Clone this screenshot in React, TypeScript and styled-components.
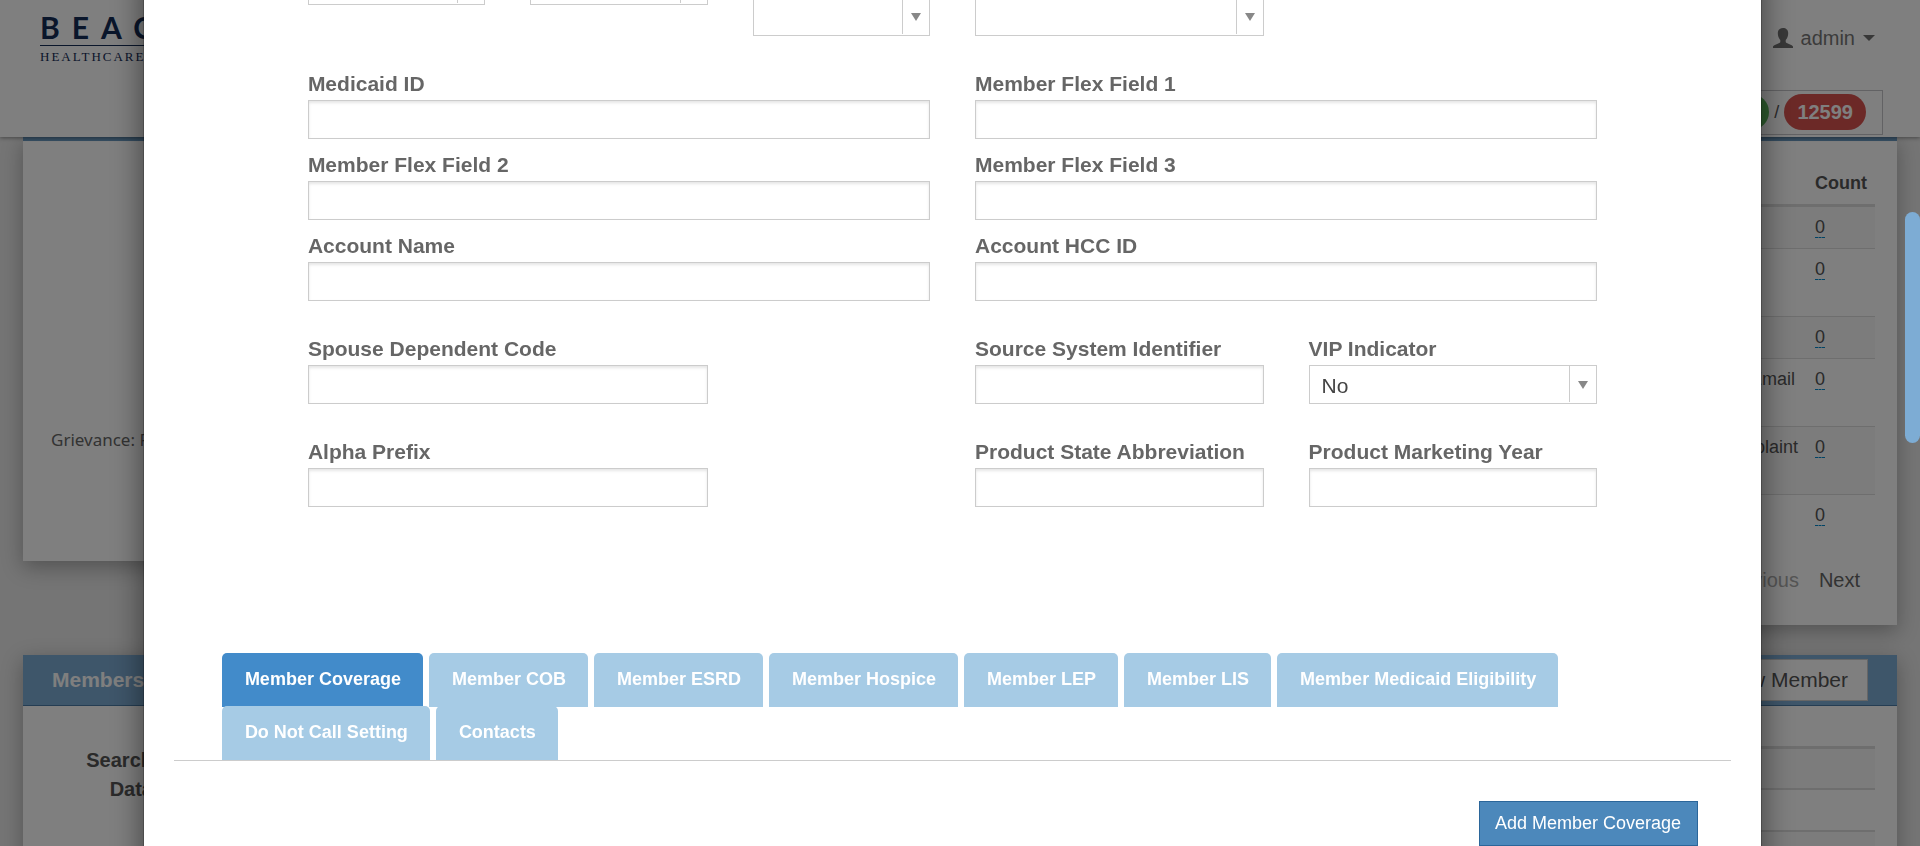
import React, { useId } from "react";
import styled, { createGlobalStyle } from "styled-components";

const GlobalStyle = createGlobalStyle`
  *, *::before, *::after { box-sizing: border-box; }
  body {
    margin: 0;
    background: #eaeaea;
    color: #555;
    font-family: "Liberation Sans", Arial, sans-serif;
    font-size: 18px;
    line-height: 26px;
  }
  button, input, select { font-family: inherit; }
`;

/* ---------- page behind the dialog ---------- */

const Page = styled.div`
  height: 100vh;
  overflow: hidden;
`;

const Header = styled.header`
  position: relative;
  z-index: 1;
  display: flex;
  justify-content: space-between;
  height: 137px;
  background: #fff;
  box-shadow: 0 1px 4px rgba(0, 0, 0, 0.4);
`;

const Logo = styled.div`
  width: 220px;
  margin: 11px 0 0 40px;
  color: #142c56;
`;

const LogoName = styled.div`
  padding-bottom: 2px;
  border-bottom: 1px solid #142c56;
  font: bold 30px/32px Lato, sans-serif;
  letter-spacing: 12px;
`;

const LogoTag = styled.div`
  font: 13px/22px "Liberation Serif", serif;
  letter-spacing: 2px;
`;

const HeaderSide = styled.div`
  display: flex;
  flex-direction: column;
  align-items: flex-end;
  gap: 38px;
  padding: 24px 37px 0 0;
`;

const UserButton = styled.button`
  display: flex;
  align-items: center;
  gap: 8px;
  padding: 0;
  margin-right: 8px;
  border: 0;
  background: none;
  color: #777;
  font-size: 20px;
  line-height: 28px;
`;

const Counters = styled.div`
  display: flex;
  align-items: center;
  gap: 5px;
  height: 45px;
  padding: 0 16px 2px;
  border: 1px solid #c4c4c8;
`;

const Badge = styled.span<{ $color: string }>`
  padding: 0 13px;
  border-radius: 18px;
  background: ${(p) => p.$color};
  color: #fff;
  font-size: 20px;
  font-weight: bold;
  line-height: 36px;
`;

const Main = styled.main`
  display: flex;
  flex-direction: column;
  gap: 30px;
  padding: 0 23px;
`;

const CardRow = styled.div`
  display: grid;
  grid-template-columns: 1fr 1fr;
  gap: 30px;
  align-items: start;
`;

const Card = styled.section`
  border-top: 4px solid #6c9cc4;
  background: #fff;
  box-shadow: 0 6px 20px rgba(0, 0, 0, 0.3);
`;

const ChartCard = styled(Card)`
  padding: 287px 28px 109px;
  font-family: "Noto Sans", sans-serif;
  font-size: 17px;
  line-height: 24px;
  color: #666;
`;

const TableCard = styled(Card)`
  padding: 20px 22px 31px;
`;

const Table = styled.table`
  width: 100%;
  border-spacing: 0;
  table-layout: fixed;
`;

const HeadCell = styled.th<{ $width?: number }>`
  width: ${(p) => (p.$width ? `${p.$width}px` : "auto")};
  padding: 9px 8px 8px;
  border-bottom: 3px solid #ddd;
  text-align: left;
`;

const BodyRow = styled.tr<{ $tall?: boolean }>`
  height: ${(p) => (p.$tall ? 68 : 42)}px;
  &:nth-child(odd) { background: #f9f9f9; }
  &:first-child { height: 41px; }
  &:first-child td { border-top: 0; }
`;

const Cell = styled.td`
  padding: 7px 8px;
  border-top: 1px solid #ddd;
  vertical-align: top;
`;

const CountLink = styled.a`
  border-bottom: 1px dashed #08c;
  color: #555;
  text-decoration: none;
`;

const Pager = styled.nav`
  display: flex;
  justify-content: flex-end;
  gap: 20px;
  padding: 4px 15px 0 0;
  font-size: 20px;
  line-height: 28px;
`;

const PagerLink = styled.a<{ $disabled?: boolean }>`
  color: ${(p) => (p.$disabled ? "#aaa" : "#666")};
  text-decoration: none;
`;

const Panel = styled.section`
  background: #fff;
  box-shadow: 0 6px 20px rgba(0, 0, 0, 0.3);
`;

const PanelHeader = styled.div`
  display: flex;
  align-items: center;
  justify-content: space-between;
  height: 51px;
  padding: 0 29px;
  border-bottom: 1px solid #4a7ba6;
  background: #7dacd4;
`;

const PanelTitle = styled.h2`
  margin: 0;
  color: #fff;
  font-size: 21px;
`;

const NewButton = styled.button`
  height: 42px;
  padding: 0 19px;
  border: 1px solid #ccc;
  background: #fff;
  color: #555;
  font-size: 21px;
`;

const PanelBody = styled.div`
  display: grid;
  grid-template-columns: 1fr 1fr;
  gap: 60px;
  padding: 40px 22px;
`;

const SearchForm = styled.div`
  display: grid;
  grid-template-columns: 108px 1fr;
  gap: 33px 30px;
  font-size: 20px;
  font-weight: bold;
  line-height: 29px;
  text-align: right;
`;

const ResultRow = styled.tr`
  height: 42px;
  &:nth-child(odd) { background: #f9f9f9; }
  &:first-child td { border-top-width: 3px; }
`;

const ResultCell = styled.td`
  border-top: 2px solid #ddd;
`;

/* ---------- dialog ---------- */

const Backdrop = styled.div`
  position: fixed;
  inset: 0;
  z-index: 10;
  display: flex;
  overflow: hidden;
  background: rgba(0, 0, 0, 0.5);
`;

const DialogArea = styled.div`
  flex: 1;
  display: flex;
  justify-content: center;
  align-items: flex-start;
`;

const Dialog = styled.div`
  width: 85%;
  margin-top: -35px;
  padding: 0 30px 60px;
  border: 1px solid rgba(0, 0, 0, 0.2);
  background: #fff;
  background-clip: padding-box;
  box-shadow: 0 5px 30px rgba(0, 0, 0, 0.5);
`;

const ScrollTrack = styled.div`
  width: 15px;
  padding-top: 212px;
`;

const ScrollThumb = styled.div`
  height: 231px;
  border-radius: 8px;
  background: #7dacd4;
`;

const Form = styled.form`
  display: flex;
  flex-direction: column;
  gap: 36px;
  padding: 0 134px;
`;

const FieldGrid = styled.div`
  display: grid;
  grid-template-columns: repeat(12, minmax(0, 1fr));
  gap: 14px 45px;
  align-items: start;
`;

const Field = styled.div<{ $span: number; $start?: number; $dropped?: boolean }>`
  grid-column: ${(p) => p.$start ?? "auto"} / span ${(p) => p.$span};
  padding-top: ${(p) => (p.$dropped ? 31 : 0)}px;
`;

const Label = styled.label`
  display: block;
  padding-bottom: 4px;
  color: #666;
  font-size: 21px;
  font-weight: bold;
  line-height: 24px;
  white-space: nowrap;
`;

const Input = styled.input`
  display: block;
  width: 100%;
  height: 39px;
  padding: 0 12px;
  border: 1px solid #ccc;
  background: #fff;
  box-shadow: inset 0 2px 3px rgba(0, 0, 0, 0.1);
  color: #444;
  font-size: 21px;
`;

const SelectBox = styled.div`
  display: grid;
  grid-template-columns: 1fr 27px;
  height: 39px;
  border: 1px solid #ccc;
`;

const Select = styled.select`
  grid-area: 1 / 1 / 2 / 3;
  width: 100%;
  padding: 2px 40px 0 12px;
  border: 0;
  border-radius: 0;
  background: none;
  appearance: none;
  color: #444;
  font-size: 21px;
`;

const SelectArrow = styled.span`
  grid-area: 1 / 2;
  display: flex;
  align-items: center;
  justify-content: center;
  margin-bottom: 1px;
  padding-top: 2px;
  border-left: 1px solid #ccc;
  pointer-events: none;
`;

const Tabs = styled.div`
  display: flex;
  flex-wrap: wrap;
  column-gap: 6px;
  margin-top: 146px;
  padding: 0 48px 1px;
  border-bottom: 1px solid #ccc;
`;

const Tab = styled.button<{ $active: boolean }>`
  height: 54px;
  margin-bottom: -1px;
  padding: 0 22px 1px 23px;
  border: 0;
  border-radius: 5px 5px 0 0;
  background: ${(p) => (p.$active ? "#428bca" : "#a6cbe5")};
  color: #fff;
  font-size: 18px;
  font-weight: bold;
`;

const Actions = styled.div`
  display: flex;
  justify-content: flex-end;
  padding: 40px 33px 0;
`;

const AddButton = styled.button`
  height: 45px;
  padding: 0 16px 0 15px;
  border: 1px solid #2b669a;
  background: #4c88bb;
  color: #fff;
  font-size: 18px;
`;

function TextField(props: { label: string; span: number; start?: number }) {
  const id = useId();
  return (
    <Field $span={props.span} $start={props.start}>
      <Label htmlFor={id}>{props.label}</Label>
      <Input id={id} type="text" />
    </Field>
  );
}

function SelectField(props: {
  label?: string;
  name?: string;
  span: number;
  dropped?: boolean;
  options: string[];
}) {
  const id = useId();
  return (
    <Field $span={props.span} $dropped={props.dropped}>
      {props.label && <Label htmlFor={id}>{props.label}</Label>}
      <SelectBox>
        <Select id={id} aria-label={props.name}>
          {props.options.map((o) => (
            <option key={o}>{o}</option>
          ))}
        </Select>
        <SelectArrow>
          <svg width="10" height="8" viewBox="0 0 10 8" aria-hidden="true">
            <path d="M0 0h10L5 8z" fill="#888" />
          </svg>
        </SelectArrow>
      </SelectBox>
    </Field>
  );
}

const countRows = [
  { source: "", tall: false },
  { source: "", tall: true },
  { source: "", tall: false },
  { source: "Per Email", tall: true },
  { source: "Complaint", tall: true },
  { source: "", tall: true },
];

const tabs = [
  "Member Coverage",
  "Member COB",
  "Member ESRD",
  "Member Hospice",
  "Member LEP",
  "Member LIS",
  "Member Medicaid Eligibility",
  "Do Not Call Setting",
  "Contacts",
];

export default function App() {
  return (
    <>
      <GlobalStyle />
      <Page>
        <Header>
          <Logo>
            <LogoName>BEACON</LogoName>
            <LogoTag>HEALTHCARE</LogoTag>
          </Logo>
          <HeaderSide>
            <UserButton type="button">
              <svg width="20" height="20" viewBox="0 0 20 20" aria-hidden="true">
                <path
                  d="M10 0C6.900 0 4.800 2 4.800 5c0 3 .9 5.400 2.500 7v1.800c0 .7-.4 1-1 1.300L1.300 17.200C.4 17.700 0 18.200 0 19v1h20v-1c0-.8-.4-1.300-1.300-1.800l-5-2.100c-.6-.3-1-.6-1-1.300V12c1.600-1.600 2.500-4 2.500-7 0-3-2.100-5-5.200-5z"
                  fill="#707070"
                />
              </svg>
              admin
              <svg width="12" height="6" viewBox="0 0 12 6" aria-hidden="true">
                <path d="M0 0h12L6 6z" fill="#707070" />
              </svg>
            </UserButton>
            <Counters>
              <Badge $color="#5cb85c">12599</Badge>
              <span>/</span>
              <Badge $color="#d9534f">12599</Badge>
            </Counters>
          </HeaderSide>
        </Header>

        <Main>
          <CardRow>
            <ChartCard>Grievance: Fax</ChartCard>
            <TableCard>
              <Table>
                <thead>
                  <tr>
                    <HeadCell $width={98} as="td" />
                    <HeadCell as="td" />
                    <HeadCell $width={98} as="td" />
                    <HeadCell $width={68}>Count</HeadCell>
                  </tr>
                </thead>
                <tbody>
                  {countRows.map((row, i) => (
                    <BodyRow key={i} $tall={row.tall}>
                      <Cell />
                      <Cell />
                      <Cell>{row.source}</Cell>
                      <Cell>
                        <CountLink href="#count">0</CountLink>
                      </Cell>
                    </BodyRow>
                  ))}
                </tbody>
              </Table>
              <Pager>
                <PagerLink href="#previous" $disabled>
                  Previous
                </PagerLink>
                <PagerLink href="#next">Next</PagerLink>
              </Pager>
            </TableCard>
          </CardRow>

          <Panel>
            <PanelHeader>
              <PanelTitle>Members</PanelTitle>
              <NewButton type="button">New Member</NewButton>
            </PanelHeader>
            <PanelBody>
              <SearchForm>
                <label htmlFor="search-data">
                  Search
                  <br />
                  Data
                </label>
                <Input id="search-data" type="text" />
                <label htmlFor="search-member">Member</label>
                <Input id="search-member" type="text" />
              </SearchForm>
              <Table>
                <tbody>
                  {[0, 1, 2, 3].map((i) => (
                    <ResultRow key={i}>
                      <ResultCell />
                    </ResultRow>
                  ))}
                </tbody>
              </Table>
            </PanelBody>
          </Panel>
        </Main>
      </Page>

      <Backdrop>
        <DialogArea>
          <Dialog role="dialog" aria-modal="true" aria-label="Member">
            <Form>
              <FieldGrid>
                <SelectField name="Option 1" span={2} options={[""]} />
                <SelectField name="Option 2" span={2} options={[""]} />
                <SelectField name="Option 3" span={2} dropped options={[""]} />
                <SelectField name="Option 4" span={3} dropped options={[""]} />
              </FieldGrid>
              <FieldGrid>
                <TextField label="Medicaid ID" span={6} />
                <TextField label="Member Flex Field 1" span={6} />
                <TextField label="Member Flex Field 2" span={6} />
                <TextField label="Member Flex Field 3" span={6} />
                <TextField label="Account Name" span={6} />
                <TextField label="Account HCC ID" span={6} />
              </FieldGrid>
              <FieldGrid>
                <TextField label="Spouse Dependent Code" span={4} />
                <TextField label="Source System Identifier" span={3} start={7} />
                <SelectField label="VIP Indicator" span={3} options={["No", "Yes"]} />
              </FieldGrid>
              <FieldGrid>
                <TextField label="Alpha Prefix" span={4} />
                <TextField label="Product State Abbreviation" span={3} start={7} />
                <TextField label="Product Marketing Year" span={3} />
              </FieldGrid>
            </Form>

            <Tabs role="tablist">
              {tabs.map((name, i) => (
                <Tab key={name} type="button" role="tab" aria-selected={i === 0} $active={i === 0}>
                  {name}
                </Tab>
              ))}
            </Tabs>

            <Actions>
              <AddButton type="button">Add Member Coverage</AddButton>
            </Actions>
          </Dialog>
        </DialogArea>
        <ScrollTrack>
          <ScrollThumb />
        </ScrollTrack>
      </Backdrop>
    </>
  );
}
